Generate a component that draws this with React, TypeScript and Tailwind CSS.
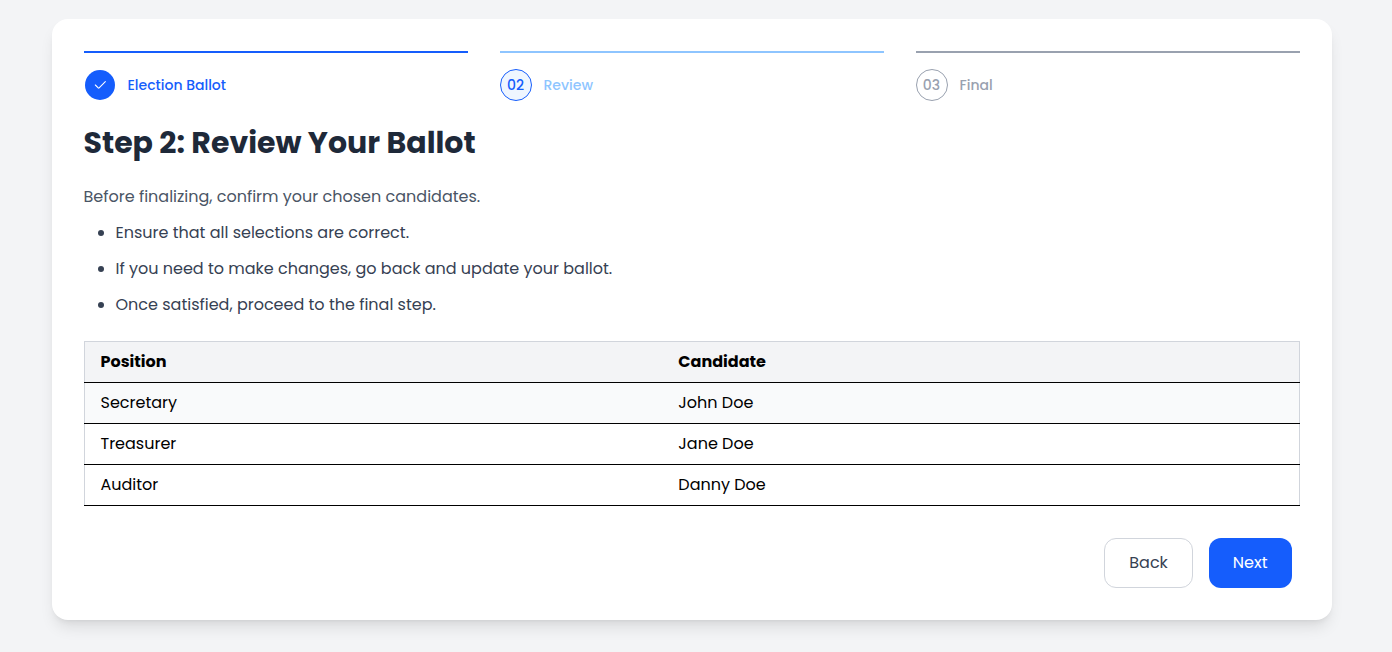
import React from "react";

type Step = {
  number: string;
  label: string;
  bar: string;
  circle: string;
  text: string;
  done?: boolean;
};

const steps: Step[] = [
  {
    number: "01",
    label: "Election Ballot",
    bar: "border-[#155dfc]",
    circle: "border-transparent bg-[#155dfc] text-white",
    text: "text-[#155dfc]",
    done: true,
  },
  {
    number: "02",
    label: "Review",
    bar: "border-[#8ec5ff]",
    circle: "border-[#155dfc] bg-[#eff6ff] text-[#155dfc]",
    text: "text-[#8ec5ff]",
  },
  {
    number: "03",
    label: "Final",
    bar: "border-[#99a1af]",
    circle: "border-[#99a1af] bg-white text-[#99a1af]",
    text: "text-[#99a1af]",
  },
];

const rows = [
  { position: "Secretary", candidate: "John Doe" },
  { position: "Treasurer", candidate: "Jane Doe" },
  { position: "Auditor", candidate: "Danny Doe" },
];

function StepItem({ step }: { step: Step }) {
  return (
    <li className={`flex flex-1 items-center border-t-2 pt-4 ${step.bar}`}>
      <span
        className={`flex h-8 w-8 items-center justify-center rounded-full border bg-clip-padding text-sm font-medium ${step.circle}`}
      >
        {step.done ? (
          <svg className="h-4 w-4" viewBox="0 0 24 24" fill="none" stroke="currentColor" strokeWidth="1.6">
            <path
              d="M5 12L9.28722 16.2923C9.62045 16.6259 9.78706 16.7927 9.99421 16.7928C10.2014 16.7929 10.3681 16.6262 10.7016 16.2929L20 7"
              strokeLinecap="round"
            />
          </svg>
        ) : (
          step.number
        )}
      </span>
      <span className={`ml-3 text-sm font-medium ${step.text}`}>{step.label}</span>
    </li>
  );
}

export default function App() {
  return (
    <div className="min-h-[652px] overflow-hidden bg-gray-100 pt-[19px] pb-8 pl-[51.5px] font-[Poppins,Inter,sans-serif]">
      <main className="w-[1280px] rounded-2xl bg-white p-8 shadow-lg">
        <ol className="flex gap-8">
          {steps.map((step) => (
            <StepItem key={step.number} step={step} />
          ))}
        </ol>
        <h1 className="mt-6 text-3xl font-bold text-gray-800">Step 2: Review Your Ballot</h1>
        <p className="mt-6 text-base text-gray-600">Before finalizing, confirm your chosen candidates.</p>
        <ul className="mt-3 list-disc space-y-3 pl-8 text-gray-700">
          <li>Ensure that all selections are correct.</li>
          <li>If you need to make changes, go back and update your ballot.</li>
          <li>Once satisfied, proceed to the final step.</li>
        </ul>
        <table className="mt-6 w-full border-collapse border border-gray-300 text-left text-black">
          <thead>
            <tr className="border-b border-black bg-gray-100">
              <th className="px-4 py-2 font-bold">Position</th>
              <th className="px-4 py-2 font-bold">Candidate</th>
            </tr>
          </thead>
          <tbody>
            {rows.map((row) => (
              <tr key={row.position} className="border-b border-black first:bg-gray-50">
                <td className="px-4 py-2">{row.position}</td>
                <td className="px-4 py-2">{row.candidate}</td>
              </tr>
            ))}
          </tbody>
        </table>
        <div className="mt-8 flex justify-end gap-4 pr-2">
          <button className="rounded-xl border border-gray-300 bg-white px-6 py-3 text-gray-700">Back</button>
          <button className="rounded-xl bg-[#155dfc] px-6 py-3 text-white">Next</button>
        </div>
      </main>
    </div>
  );
}
